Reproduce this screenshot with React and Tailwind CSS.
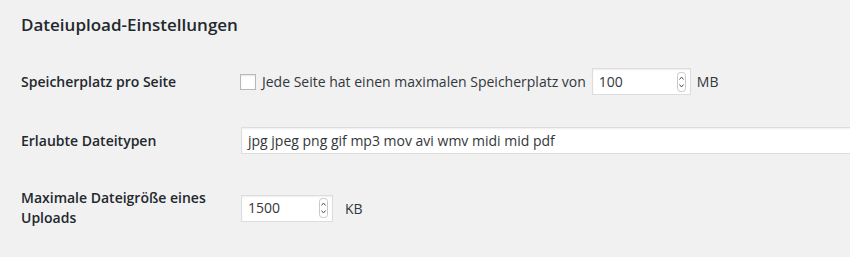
import React from "react";

function Spinner() {
  return (
    <svg width="9" height="20" viewBox="0 0 9 20" className="shrink-0">
      <rect x="0.5" y="0.5" width="8" height="19" rx="3" fill="#fff" stroke="#c8c8c8" />
      <path d="M2.5 7.5 L4.5 5 L6.5 7.5" fill="none" stroke="#555" strokeWidth="1" />
      <path d="M2.5 12.5 L4.5 15 L6.5 12.5" fill="none" stroke="#555" strokeWidth="1" />
    </svg>
  );
}

function NumberBox({ value, width }) {
  return (
    <div
      className={`flex items-center bg-white border border-[#dddddd] shadow-[inset_0_1px_2px_rgba(0,0,0,0.07)] h-[27px] pl-[6px] pr-[4px] ${width}`}
    >
      <span className="flex-1 text-[14px] text-[#32373c] leading-none">{value}</span>
      <Spinner />
    </div>
  );
}

export default function App() {
  return (
    <div
      className="w-[850px] h-[257px] overflow-hidden bg-[#f1f1f1] text-[#23282d]"
      style={{ fontFamily: '"Open Sans", "Liberation Sans", sans-serif' }}
    >
      <div className="pl-[21px]">
        <h2 className="pt-[11px] h-[50px] text-[17px] leading-[28px] font-semibold">
          Dateiupload-Einstellungen
        </h2>

        <div className="flex items-center h-[63px]">
          <div className="w-[220px] shrink-0 text-[14px] font-semibold leading-[20px]">
            Speicherplatz pro Seite
          </div>
          <div className="flex items-center text-[14px] text-[#32373c]">
            <span className="w-[16px] h-[16px] bg-white border border-[#b4b9be] shadow-[inset_0_1px_2px_rgba(0,0,0,0.1)] ml-[-1px] mr-[6px]" />
            <span>Jede Seite hat einen maximalen Speicherplatz von</span>
            <div className="ml-[6px] mr-[6px]">
              <NumberBox value="100" width="w-[99px]" />
            </div>
            <span>MB</span>
          </div>
        </div>

        <div className="flex items-center h-[55px]">
          <div className="w-[220px] shrink-0 text-[14px] font-semibold leading-[20px]">
            Erlaubte Dateitypen
          </div>
          <div className="shrink-0 w-[700px] h-[27px] flex items-center bg-white border border-[#dddddd] shadow-[inset_0_1px_2px_rgba(0,0,0,0.07)] px-[6px] text-[14px] text-[#32373c]">
            jpg jpeg png gif mp3 mov avi wmv midi mid pdf
          </div>
        </div>

        <div className="flex items-center h-[80px]">
          <div className="w-[220px] shrink-0 text-[14px] font-semibold leading-[20px]">
            Maximale Dateigröße eines
            <br />
            Uploads
          </div>
          <div className="flex items-center text-[14px] text-[#32373c]">
            <NumberBox value="1500" width="w-[92px]" />
            <span className="ml-[12px]">KB</span>
          </div>
        </div>
      </div>
    </div>
  );
}
